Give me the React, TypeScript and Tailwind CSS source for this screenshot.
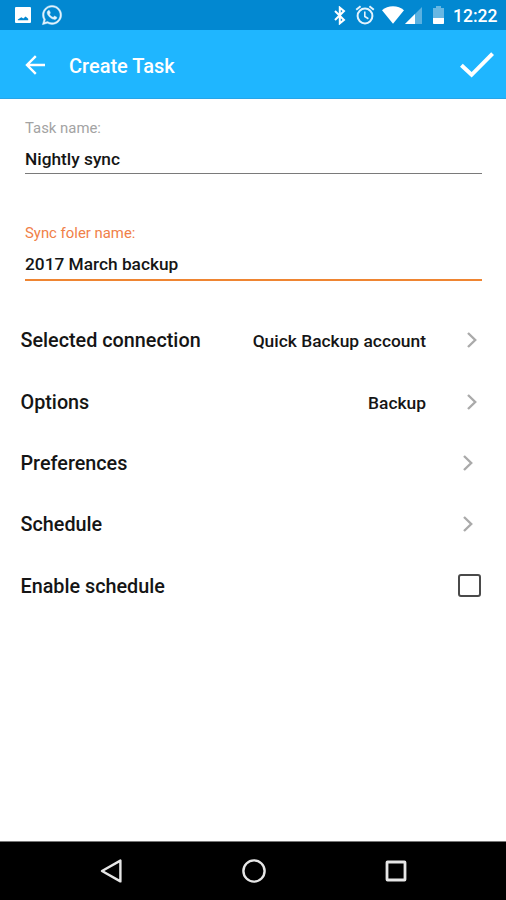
import { useState } from "react";
import { FaWhatsapp } from "react-icons/fa";

function StatusBar() {
  return (
    <div className="flex h-[30px] shrink-0 items-center bg-[#0288d1] pr-[9px] pl-[15px] text-white">
      <svg viewBox="0 0 16 16" className="h-4 w-4" aria-hidden>
        <path
          fillRule="evenodd"
          fill="currentColor"
          d="M1 0h14a1 1 0 0 1 1 1v14a1 1 0 0 1-1 1H1a1 1 0 0 1-1-1V1a1 1 0 0 1 1-1zM2.8 13.2h10.4v-1.4l-2.6-2.4-2.3 2-1.9-1.2-3.6 2.2z"
        />
      </svg>
      <FaWhatsapp
        className="ml-[10px] h-[22px] w-[22px] text-[#e3f3fd]"
        stroke="currentColor"
        strokeWidth="10"
        aria-hidden
      />
      <div className="ml-auto flex items-center">
        <svg viewBox="0 0 12 19" className="h-[19px] w-3" fill="none" stroke="currentColor" strokeWidth="2" aria-hidden>
          <path d="M1 5l9 9-4.2 3.4V1.6L10 5l-9 9" />
        </svg>
        <svg
          viewBox="0 0 20 20"
          className="ml-[9px] h-5 w-5 text-[#e3f3fd]"
          fill="none"
          stroke="currentColor"
          strokeWidth="2"
          aria-hidden
        >
          <circle cx="10" cy="11" r="7.4" />
          <path d="M1.2 4.8L5.6 1.2M18.8 4.8l-4.4-3.6" />
          <path strokeWidth="1.6" d="M9.8 6.5v5l3.6 2.2" />
        </svg>
        <svg viewBox="0 0 22 18" className="ml-[7px] h-[18px] w-[22px]" aria-hidden>
          <path fill="currentColor" d="M0 4.2C3 1.6 6.8.2 11 .2s8 1.4 11 4L11 17.8z" />
        </svg>
        <svg viewBox="0 0 17 17" className="ml-[1px] h-[17px] w-[17px]" aria-hidden>
          <path fill="currentColor" fillOpacity=".35" d="M0 17L17 0v17z" />
          <path fill="currentColor" d="M0 17L10 7v10z" />
        </svg>
        <svg viewBox="0 0 11 18" className="ml-[11px] h-[18px] w-[11px]" aria-hidden>
          <path fill="currentColor" fillOpacity=".4" d="M3 0h5v2h3v10H0V2h3z" />
          <path fill="currentColor" d="M0 12h11v5.2a.8.8 0 0 1-.8.8H.8a.8.8 0 0 1-.8-.8z" />
        </svg>
        <span className="ml-[9px] w-[44px] pt-[3px] text-[17.5px] leading-none font-medium whitespace-nowrap">
          12:22
        </span>
      </div>
    </div>
  );
}

function AppBar() {
  return (
    <header className="flex h-[69px] shrink-0 items-center border-b border-[#27a5e8] bg-[#1fb6ff] pt-[2px] pr-[12px] pl-[25px] text-white">
      <button type="button" aria-label="Back">
        <svg viewBox="0 0 20 20" className="h-5 w-5" fill="none" stroke="currentColor" strokeWidth="2.4">
          <path d="M20 10H2.5M10.8 1.2L2 10l8.8 8.8" />
        </svg>
      </button>
      <h1 className="ml-[24px] pt-[1px] text-[20px] leading-6 font-medium">Create Task</h1>
      <button type="button" className="ml-auto" aria-label="Save">
        <svg viewBox="0 0 34 26" className="h-[26px] w-[34px]" fill="none" stroke="currentColor" strokeWidth="4">
          <path d="M1.4 13.2l10.2 9.6L32.6 1.6" />
        </svg>
      </button>
    </header>
  );
}

function Field({ label, value, active }: { label: string; value: string; active?: boolean }) {
  return (
    <label className="block h-[105px]">
      <span
        className={
          active
            ? "block text-[14.9px] leading-5 text-[#f08048]"
            : "block text-[14.9px] leading-5 text-[#a3a3a3]"
        }
      >
        {label}
      </span>
      <span
        className={
          active
            ? "mt-[9px] block h-[29px] border-b-2 border-[#ef8532] text-[17.3px] leading-[25px] font-medium text-[#151515]"
            : "mt-[9px] block h-[27px] border-b border-[#7a7a7a] text-[17.3px] leading-[25px] font-medium text-[#151515]"
        }
      >
        {value}
      </span>
    </label>
  );
}

function Chevron() {
  return (
    <svg
      viewBox="0 0 10 16"
      className="mb-[2px] h-4 w-[10px]"
      fill="none"
      stroke="#aaaaaa"
      strokeWidth="2.4"
      aria-hidden
    >
      <path d="M1 1l7.2 7L1 15" />
    </svg>
  );
}

const rows = [
  { label: "Selected connection", value: "Quick Backup account" },
  { label: "Options", value: "Backup" },
  { label: "Preferences" },
  { label: "Schedule" },
];

export default function App() {
  const [enabled, setEnabled] = useState(false);

  return (
    <div className="flex h-[900px] w-[506px] flex-col overflow-hidden bg-white font-['Roboto',sans-serif]">
      <StatusBar />
      <AppBar />
      <main className="flex-1">
        <div className="pt-[19px] pr-6 pl-[25px]">
          <Field label="Task name:" value="Nightly sync" />
          <Field label="Sync foler name:" value="2017 March backup" active />
        </div>
        <div className="-mt-[17.4px] pl-[20.5px] text-[#151515]">
          {rows.map((row) => (
            <div
              key={row.label}
              className={
                row.value ? "flex h-[61.4px] items-center pr-[29px]" : "flex h-[61.4px] items-center pr-[33px]"
              }
            >
              <span className="text-[19.8px] leading-6 font-medium">{row.label}</span>
              <span className="mr-[41px] ml-auto text-[17.4px] leading-6 font-medium">{row.value}</span>
              <Chevron />
            </div>
          ))}
          <div className="flex h-[61.4px] items-center justify-between pr-[25px]">
            <span className="text-[19.8px] leading-6 font-medium">Enable schedule</span>
            <button
              type="button"
              role="checkbox"
              aria-checked={enabled}
              aria-label="Enable schedule"
              onClick={() => setEnabled(!enabled)}
              className="mb-[2px] h-[23px] w-[23px] rounded-[3px] border-2 border-[#4a4a4a]"
            />
          </div>
        </div>
      </main>
      <nav className="flex h-[59px] shrink-0 items-center justify-between border-t border-[#777] bg-black pr-[99px] pl-[100px]">
        <svg viewBox="0 0 22 24" className="h-6 w-[22px]" fill="none" stroke="#e6e6e6" strokeWidth="2.4" aria-hidden>
          <path strokeLinejoin="round" d="M20.4 1.6v20.8L2 12z" />
        </svg>
        <svg viewBox="0 0 24 24" className="h-6 w-6" fill="none" stroke="#e6e6e6" strokeWidth="2.4" aria-hidden>
          <circle cx="12" cy="12" r="10.6" />
        </svg>
        <svg viewBox="0 0 22 22" className="h-[22px] w-[22px]" fill="none" stroke="#e6e6e6" strokeWidth="2.8" aria-hidden>
          <rect x="2" y="2" width="18" height="18" rx=".5" />
        </svg>
      </nav>
    </div>
  );
}
